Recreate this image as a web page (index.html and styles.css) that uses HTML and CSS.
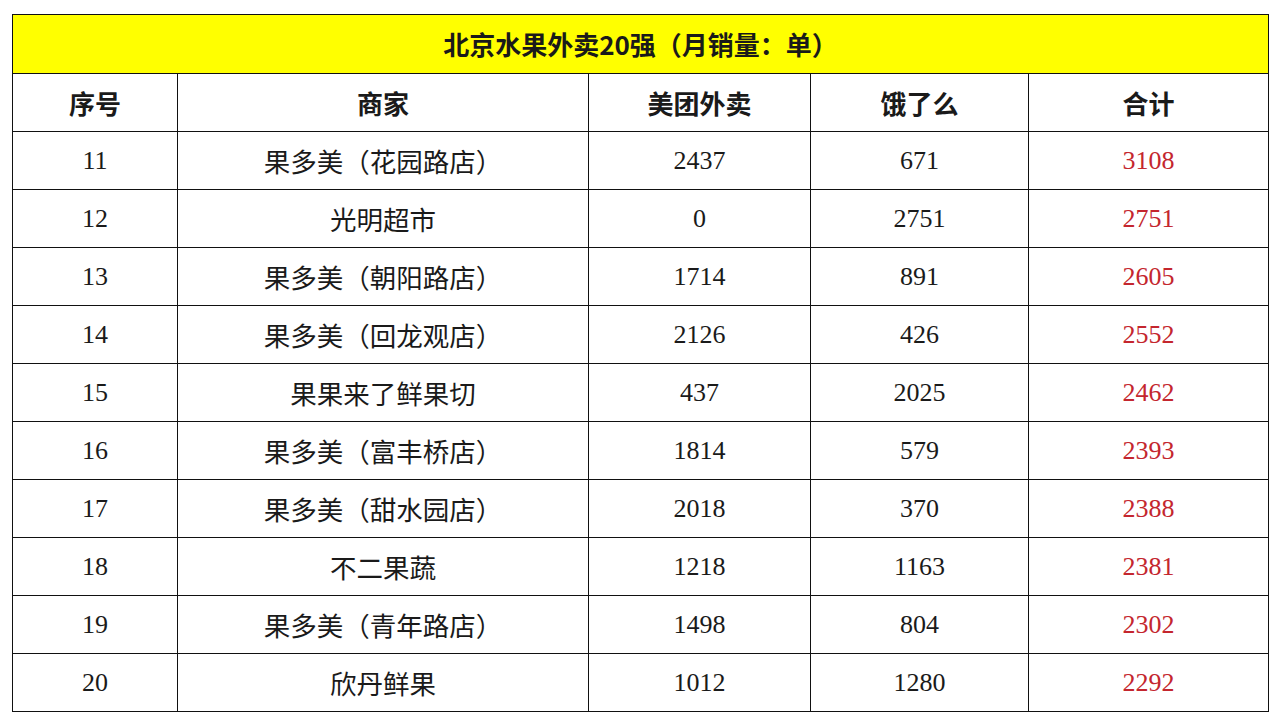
FILE: index.html
```html
<!DOCTYPE html>
<html lang="zh">
<head>
<meta charset="utf-8">
<title>北京水果外卖20强</title>
<link rel="stylesheet" href="styles.css">
</head>
<body>
<div class="page">
<table class="rank">
<colgroup>
<col class="c1"><col class="c2"><col class="c3"><col class="c4"><col class="c5">
</colgroup>
<thead>
<tr class="title-row"><th colspan="5">北京水果外卖20强（月销量：单）</th></tr>
<tr class="head-row"><th>序号</th><th>商家</th><th>美团外卖</th><th>饿了么</th><th>合计</th></tr>
</thead>
<tbody>
<tr><td class="num">11</td><td class="name">果多美（花园路店）</td><td class="num">2437</td><td class="num">671</td><td class="num total">3108</td></tr>
<tr><td class="num">12</td><td class="name">光明超市</td><td class="num">0</td><td class="num">2751</td><td class="num total">2751</td></tr>
<tr><td class="num">13</td><td class="name">果多美（朝阳路店）</td><td class="num">1714</td><td class="num">891</td><td class="num total">2605</td></tr>
<tr><td class="num">14</td><td class="name">果多美（回龙观店）</td><td class="num">2126</td><td class="num">426</td><td class="num total">2552</td></tr>
<tr><td class="num">15</td><td class="name">果果来了鲜果切</td><td class="num">437</td><td class="num">2025</td><td class="num total">2462</td></tr>
<tr><td class="num">16</td><td class="name">果多美（富丰桥店）</td><td class="num">1814</td><td class="num">579</td><td class="num total">2393</td></tr>
<tr><td class="num">17</td><td class="name">果多美（甜水园店）</td><td class="num">2018</td><td class="num">370</td><td class="num total">2388</td></tr>
<tr><td class="num">18</td><td class="name">不二果蔬</td><td class="num">1218</td><td class="num">1163</td><td class="num total">2381</td></tr>
<tr><td class="num">19</td><td class="name">果多美（青年路店）</td><td class="num">1498</td><td class="num">804</td><td class="num total">2302</td></tr>
<tr><td class="num">20</td><td class="name">欣丹鲜果</td><td class="num">1012</td><td class="num">1280</td><td class="num total">2292</td></tr>
</tbody>
</table>
</div>
</body>
</html>
```
FILE: styles.css
```css
html, body {
  margin: 0;
  padding: 0;
  background: #ffffff;
}
.page {
  padding: 14px 12px 0 12px;
}
.rank {
  border-collapse: collapse;
  table-layout: fixed;
  width: 1256px;
  color: #1a1a1a;
}
.c1 { width: 165px; }
.c2 { width: 411px; }
.c3 { width: 222px; }
.c4 { width: 218px; }
.c5 { width: 240px; }
.rank th, .rank td {
  border: 1px solid #111111;
  text-align: center;
  vertical-align: middle;
  padding: 0;
  height: 57px;
  line-height: 1.2;
}
.title-row th {
  background: #ffff00;
  height: 58px;
  font-family: "Noto Sans CJK SC", sans-serif;
  font-weight: 700;
  font-size: 26px;
}
.head-row th {
  font-family: "Noto Sans CJK SC", sans-serif;
  font-weight: 700;
  font-size: 26px;
}
.name {
  font-family: "Noto Sans CJK SC", sans-serif;
  font-weight: 400;
  font-size: 26.5px;
}
.num {
  font-family: "Liberation Serif", "Noto Sans CJK SC", serif;
  font-size: 26px;
}
.total {
  color: #c4262e;
}
```
